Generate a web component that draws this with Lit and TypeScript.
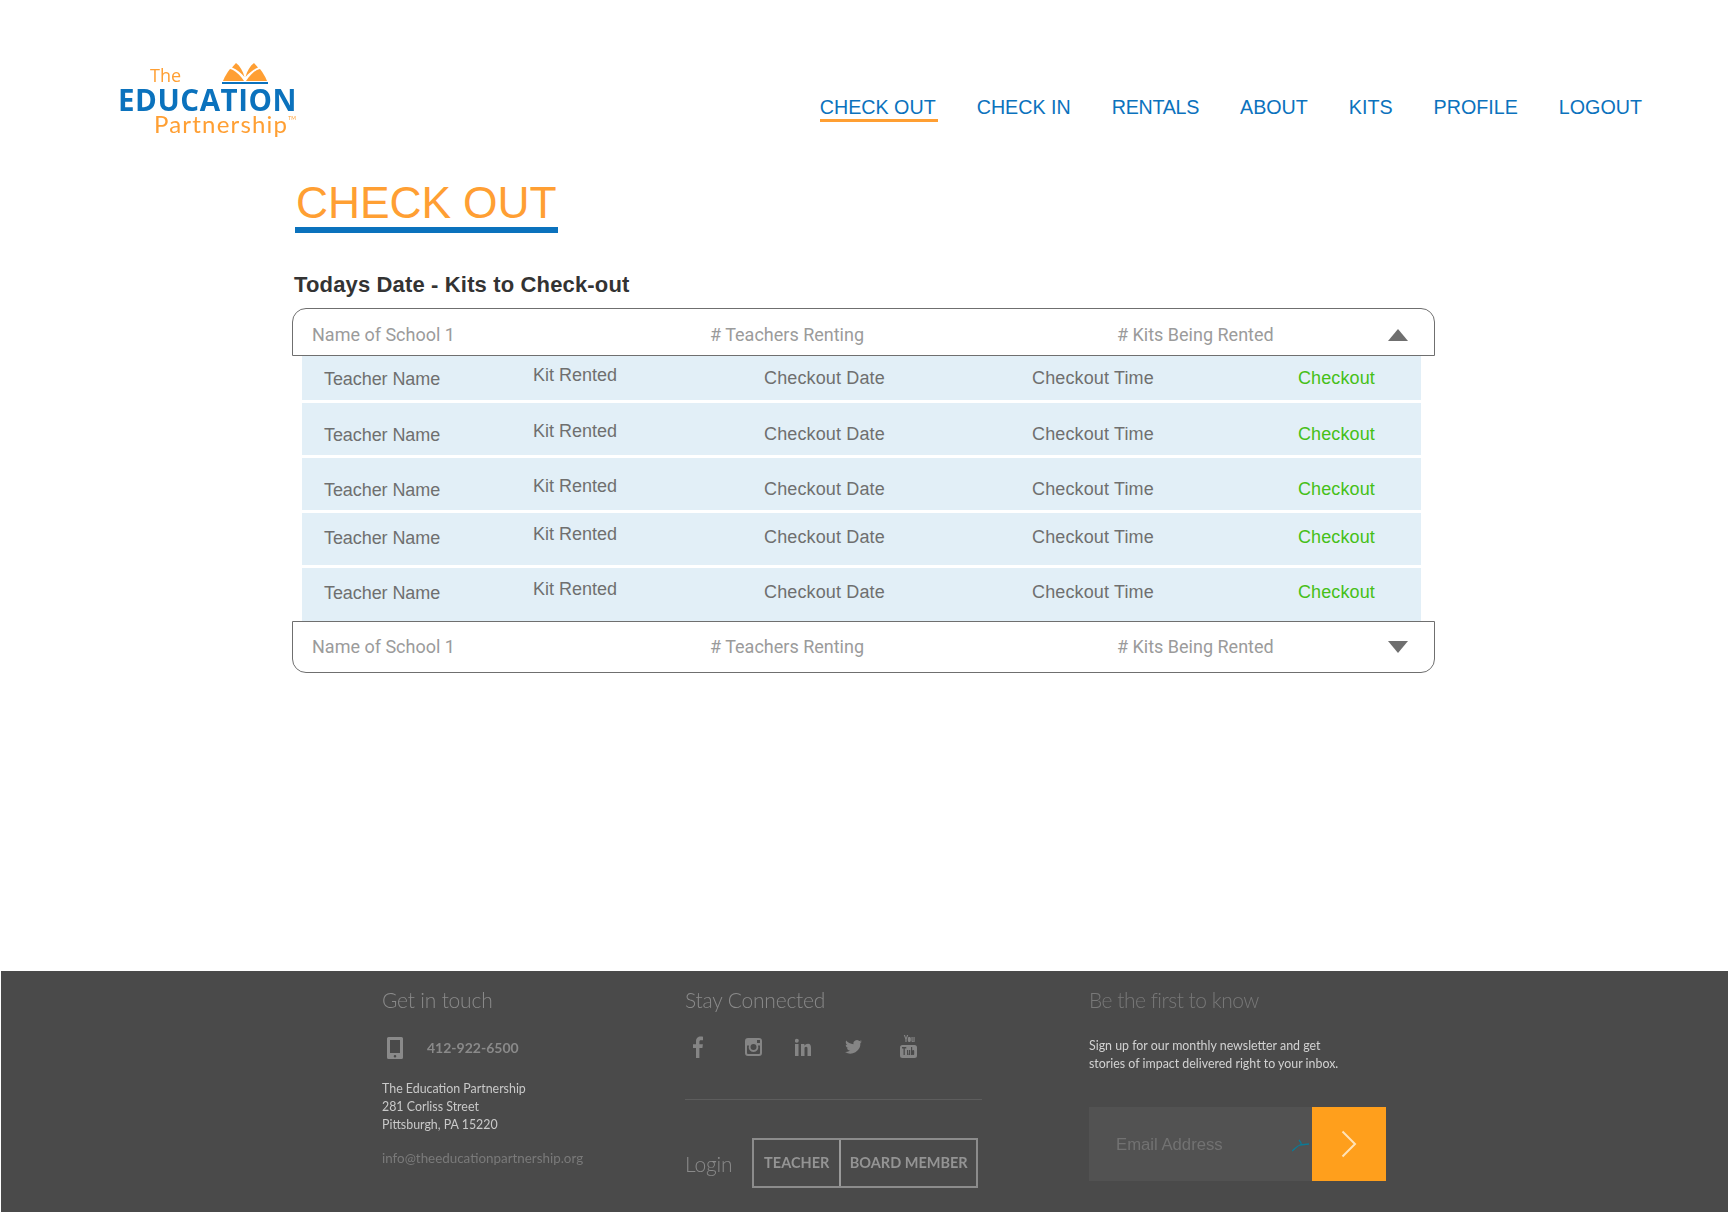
import { LitElement, html, css, svg } from "lit";
import { customElement } from "lit/decorators.js";

const NAV = ["CHECK OUT", "CHECK IN", "RENTALS", "ABOUT", "KITS", "PROFILE", "LOGOUT"];
const ROWS = [
  { h: 44, t: 12, k: 8, c: 11 },
  { h: 52, t: 21, k: 17, c: 20 },
  { h: 52, t: 21, k: 17, c: 20 },
  { h: 52, t: 14, k: 10, c: 13 },
  { h: 53, t: 14, k: 10, c: 13 },
];

@customElement("app-root")
export class AppRoot extends LitElement {
  static styles = css`
    :host { display: block; width: 1728px; height: 1212px; background: #fff; font-family: "Liberation Sans", Arial, sans-serif; overflow: hidden; }
    .page { display: flex; flex-direction: column; height: 1212px; }
    .top { display: flex; justify-content: space-between; align-items: flex-start; height: 155px; padding: 63px 84px 0 119px; box-sizing: border-box; }
    .logo { width: 178px; display: flex; flex-direction: column; filter: blur(0.3px); }
    .logo-top { display: flex; height: 23px; align-items: flex-start; flex: none; }
    .logo-the { font: 400 18px/20px "Open Sans", sans-serif; color: #ff9f33; margin: 2px 0 0 31px; width: 72px; }
    .logo-book { display: block; flex: none; }
    .logo-edu { font: 700 29.5px/28px "Open Sans", "Liberation Sans", sans-serif; color: #0b72bd; letter-spacing: 0.55px; height: 28px; flex: none; white-space: nowrap; margin-left: -1px; }
    .logo-part { font: 400 24px/22px "Lato", sans-serif; color: #ff9f33; margin: -1px 0 0 35px; letter-spacing: 1.2px; white-space: nowrap; flex: none; }
    .logo-part sup { font-size: 5px; line-height: 0; vertical-align: 13px; letter-spacing: 0; }
    nav { display: flex; gap: 39px; padding-top: 33px; }
    nav a { font-size: 19.7px; line-height: 23px; color: #0b72bd; padding: 0 2px 0 0; border-bottom: 3px solid transparent; }
    nav a.tight { letter-spacing: -0.3px; }
    nav a.on { border-bottom-color: #ff9f33; }
    main { flex: 1; padding-left: 292px; width: 1143px; }
    .title-wrap { display: inline-block; margin-left: 3px; padding: 24px 1px 0 1px; border-bottom: 6px solid #0b72bd; }
    h1 { margin: 0; font-weight: 400; font-size: 44.4px; line-height: 48px; height: 48px; color: #ff9f33; letter-spacing: -0.1px; }
    h2 { margin: 37px 0 8px 2px; font-size: 22px; line-height: 30px; font-weight: 700; color: #333; letter-spacing: 0.15px; }
    .school { display: grid; grid-template-columns: 398px 407px 1fr 20px; align-items: center; box-sizing: border-box; border: 1px solid #6f6f6f; background: #fff; padding: 0 26px 0 19px; font: 400 18px/24px Roboto, sans-serif; color: #9b9b9b; }
    .school.open { height: 48px; border-radius: 14px 14px 0 0; padding-top: 6px; }
    .school.closed { height: 52px; border-radius: 0 0 14px 14px; }
    .arrow { width: 20px; height: 12px; display: block; }
    .rows { margin: 0 14px 0 10px; display: flex; flex-direction: column; gap: 3px; }
    .row { display: grid; grid-template-columns: 209px 231px 268px 266px 1fr; align-items: start; padding-left: 22px; background: #e2eff7; font-size: 18px; line-height: 22px; color: #6f6f6f; }
    .n { letter-spacing: -0.08px; }
    .d { letter-spacing: 0.14px; }
    .go { color: #46c018; letter-spacing: 0.1px; }
    footer { height: 241px; margin-left: 1px; background: #4a4a4a; display: grid; grid-template-columns: 303px 404px 1fr; padding: 14px 0 0 381px; box-sizing: border-box; font-family: Lato, sans-serif; }
    section { filter: blur(0.35px); }
    h3 { margin: 0; font: 300 21px/30px Lato, sans-serif; color: #8a8a8a; letter-spacing: -0.2px; }
    .phone { display: flex; align-items: center; gap: 24px; margin: 21px 0 0 5px; font: 700 14px/24px Lato, sans-serif; color: #8a8a8a; }
    .addr { margin: 20px 0 0; font-size: 12.4px; line-height: 17.8px; color: #c9c9c9; }
    .mail { margin: 16px 0 0; font-size: 13.4px; line-height: 18px; color: #7a7a7a; }
    .social { display: flex; height: 26px; margin: 19px 0 0 8px; align-items: center; }
    .social svg { display: block; }
    .rule { width: 297px; height: 1px; background: #5d5d5d; margin-top: 39px; }
    .login { display: flex; align-items: center; margin-top: 38px; gap: 20px; }
    .login h3 { margin-top: 2px; }
    .btns { display: flex; border: 2px solid #8c8c8c; height: 50px; box-sizing: border-box; width: 226px; }
    .btns span { display: flex; align-items: center; justify-content: center; font: 700 14.5px/20px Lato, sans-serif; color: #949494; }
    .btns span:first-child { width: 85px; border-right: 2px solid #9a9a9a; }
    .btns span:last-child { flex: 1; }
    .c3 h3 { color: #787878; letter-spacing: -0.5px; }
    .c3 p { margin: 22px 0 0; font-size: 12.4px; line-height: 17.6px; color: #d2d2d2; }
    .sub { display: flex; width: 297px; height: 74px; margin-top: 35px; background: #525252; }
    .email { flex: 1; display: flex; align-items: center; justify-content: space-between; padding: 2px 2px 0 27px; box-sizing: border-box; font: 400 16.7px/22px "Liberation Sans", sans-serif; color: #727272; }
    .send { width: 74px; background: #ff9f1c; display: flex; align-items: center; justify-content: center; }
  `;

  private book() {
    return html`<svg class="logo-book" width="46" height="22" viewBox="0 0 46 22">
      <g fill="#ff9f33">
        <path d="M1 18C3 13 5 10 8 6C13 7 18 12 22 18Z"/>
        <path d="M10 4.500L14 0C18 3 21 8 22.500 14C19 10 15 6.500 10 4.500Z"/>
        <path d="M45 18C43 13 41 10 38 6C33 7 28 12 24 18Z"/>
        <path d="M36 4.500L32 0C28 3 25 8 23.500 14C27 10 31 6.500 36 4.500Z"/>
      </g>
      <rect x="0" y="19" width="46" height="2" fill="#0b72bd"/>
    </svg>`;
  }

  private icons() {
    const s = (w: number, ml: number, body: unknown) =>
      html`<svg width=${w} height="24" viewBox="0 0 ${w} 24" style="margin-left:${ml}px" fill="#858585">${body}</svg>`;
    return html`
      ${s(10, 0, svg`<path d="M3 23V13H0V9.200h3V6.500C3 3 5 1.500 7.500 1.500c1.200 0 2 .1 2.500.2v3.500H8c-1.200 0-1.600.6-1.600 1.700v2.300h3.500L9.400 13h-3v10z"/>`)}
      ${s(17, 42, svg`<path fill-rule="evenodd" d="M3 3h11a3 3 0 0 1 3 3v12a3 3 0 0 1-3 3H3a3 3 0 0 1-3-3V6a3 3 0 0 1 3-3zm9 2v3h3V5zM2 10.500V18a1 1 0 0 0 1 1h11a1 1 0 0 0 1-1v-7.500h-2a4.800 4.800 0 1 1-9 0zM8.500 9a3 3 0 1 0 0 6 3 3 0 0 0 0-6z"/>`)}
      ${s(16, 33, svg`<rect x="0" y="9" width="3.500" height="12"/><circle cx="1.800" cy="5.800" r="2"/><path d="M6 9h3.400v1.700C10.200 9.500 11.500 8.700 13 8.700c2.500 0 3 1.800 3 4.300v8h-3.500v-7c0-1.400-.3-2.300-1.400-2.300-1.200 0-1.600.9-1.600 2.300v7H6z"/>`)}
      ${s(17, 34, svg`<path d="M17 6.500c-.6.300-1.300.5-2 .6.700-.4 1.300-1.100 1.500-1.900-.7.400-1.400.7-2.200.8A3.500 3.500 0 0 0 8.400 9.200C5.500 9 2.900 7.600 1.200 5.500c-.9 1.600-.4 3.600 1.100 4.600-.6 0-1.100-.2-1.600-.4 0 1.700 1.200 3.100 2.800 3.400-.5.100-1 .2-1.600.1.500 1.400 1.700 2.300 3.300 2.400A7 7 0 0 1 0 17a10 10 0 0 0 15.400-8.900c.6-.4 1.200-1 1.600-1.600z"/>`)}
      ${s(17, 38, svg`<path fill-rule="evenodd" d="M2.500 10h12A2.500 2.500 0 0 1 17 12.500v8a2.500 2.500 0 0 1-2.500 2.500h-12A2.500 2.500 0 0 1 0 20.500v-8A2.500 2.500 0 0 1 2.500 10zM2 12v1.500h1.500V20h1.300v-6.500h1.500V12zm5 3v4.500c0 .8 1.300.8 2-.2v.7h1.200v-5H9v3.600c-.3.400-.8.500-.8 0V15zm4-3v8h1.200v-.5c.8.900 2 .6 2-.6v-2.800c0-1.200-1.200-1.500-2-.6V12zM5 0l1 3 1-3h1.200L6.600 4.300V7H5.400V4.300L3.800 0zm4.300 2c1 0 1.500.6 1.500 1.400v2.200c0 .9-.5 1.500-1.500 1.500S7.800 6.500 7.800 5.600V3.400C7.800 2.600 8.300 2 9.300 2zm2.200 0h1.100v4c.2.300.6.200.9-.1V2h1.100v5h-1.100v-.6c-.7.800-2 .9-2-.3z"/>`)}
    `;
  }

  render() {
    return html`<div class="page">
      <header class="top">
        <div class="logo" role="img">
          <div class="logo-top"><span class="logo-the">The</span>${this.book()}</div>
          <div class="logo-edu">EDUCATION</div>
          <div class="logo-part">Partnership<sup>TM</sup></div>
        </div>
        <nav>${NAV.map((n, i) => html`<a class="${i === 0 ? "on" : ""} ${n === "RENTALS" ? "tight" : ""}">${n}</a>`)}</nav>
      </header>
      <main>
        <div class="title-wrap"><h1>CHECK OUT</h1></div>
        <h2>Todays Date - Kits to Check-out</h2>
        <div class="school open">
          <span>Name of School 1</span><span># Teachers Renting</span><span># Kits Being Rented</span>
          <svg class="arrow" viewBox="0 0 20 12"><path d="M10 0 20 12H0z" fill="#6f6f6f"/></svg>
        </div>
        <div class="rows">
          ${ROWS.map((r) => html`<div class="row" style="height:${r.h}px">
            <span class="n" style="margin-top:${r.t}px">Teacher Name</span>
            <span style="margin-top:${r.k}px">Kit Rented</span>
            <span class="d" style="margin-top:${r.c}px">Checkout Date</span>
            <span class="d" style="margin-top:${r.c}px">Checkout Time</span>
            <span class="go" style="margin-top:${r.c}px">Checkout</span>
          </div>`)}
        </div>
        <div class="school closed">
          <span>Name of School 1</span><span># Teachers Renting</span><span># Kits Being Rented</span>
          <svg class="arrow" viewBox="0 0 20 12"><path d="M0 0H20L10 12z" fill="#6f6f6f"/></svg>
        </div>
      </main>
      <footer>
        <section>
          <h3>Get in touch</h3>
          <div class="phone">
            <svg width="16" height="22" viewBox="0 0 16 22"><path fill-rule="evenodd" fill="#8a8a8a" d="M1.500 0h13A1.500 1.500 0 0 1 16 1.500v19a1.500 1.500 0 0 1-1.500 1.500h-13A1.500 1.500 0 0 1 0 20.500v-19A1.500 1.500 0 0 1 1.500 0zM3 3v13h10V3zm5 15a1.300 1.300 0 1 0 0 2.600A1.300 1.300 0 0 0 8 18z"/></svg>
            412-922-6500
          </div>
          <div class="addr">The Education Partnership<br />281 Corliss Street<br />Pittsburgh, PA 15220</div>
          <div class="mail">info@theeducationpartnership.org</div>
        </section>
        <section>
          <h3>Stay Connected</h3>
          <div class="social">${this.icons()}</div>
          <div class="rule"></div>
          <div class="login"><h3>Login</h3><div class="btns"><span>TEACHER</span><span>BOARD MEMBER</span></div></div>
        </section>
        <section class="c3">
          <h3>Be the first to know</h3>
          <p>Sign up for our monthly newsletter and get<br />stories of impact delivered right to your inbox.</p>
          <div class="sub">
            <div class="email">Email Address
              <svg width="18" height="13" viewBox="0 0 18 13"><path d="M0 12C3 10 5 7 8 6L17 5M7 1C8 2 9 3 9.500 6" fill="none" stroke="#0c7a96" stroke-width="1.300"/></svg>
            </div>
            <div class="send"><svg width="16" height="28" viewBox="0 0 16 28"><path d="M1.500 1.500 14 14 1.500 26.500" fill="none" stroke="#ffe3b8" stroke-width="2"/></svg></div>
          </div>
        </section>
      </footer>
    </div>`;
  }
}
